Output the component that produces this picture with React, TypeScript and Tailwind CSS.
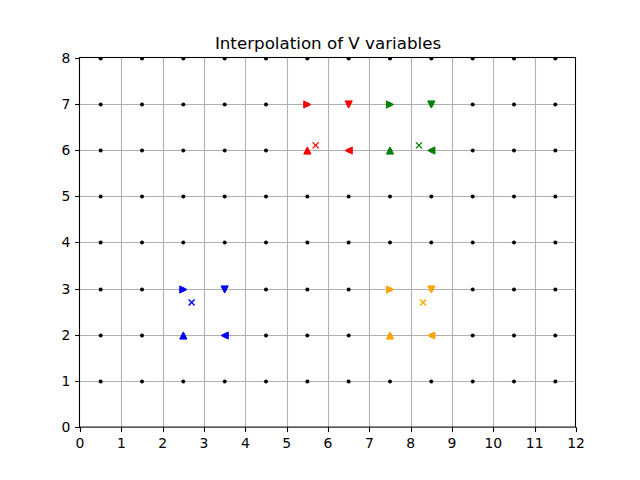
import React from "react";

const L = 80;
const R = 576;
const T = 57.6;
const B = 427.2;
const X = (v: number) => L + (v * (R - L)) / 12;
const Y = (v: number) => B - (v * (B - T)) / 8;
const snap = (p: number) => Math.round(p) + 0.5;

const groups = [
  { color: "#ff0000", x0: 5.5, y0: 6, cross: [5.7, 6.1] },
  { color: "#008000", x0: 7.5, y0: 6, cross: [8.2, 6.1] },
  { color: "#0000ff", x0: 2.5, y0: 2, cross: [2.7, 2.7] },
  { color: "#ffa500", x0: 7.5, y0: 2, cross: [8.3, 2.7] },
];

const s = 3.6;

// triangle paths centred on (cx, cy)
const tri = (kind: string, cx: number, cy: number) => {
  if (kind === "^") return `M${cx},${cy - s} L${cx - s},${cy + s} L${cx + s},${cy + s} Z`;
  if (kind === "v") return `M${cx},${cy + s} L${cx - s},${cy - s} L${cx + s},${cy - s} Z`;
  if (kind === ">") return `M${cx + s},${cy} L${cx - s},${cy - s} L${cx - s},${cy + s} Z`;
  return `M${cx - s},${cy} L${cx + s},${cy - s} L${cx + s},${cy + s} Z`;
};

const App = () => {
  const xs = Array.from({ length: 13 }, (_, i) => i);
  const ys = Array.from({ length: 9 }, (_, i) => i);
  const dots: [number, number][] = [];
  for (let j = 1; j <= 8; j++) for (let i = 0; i < 12; i++) dots.push([i + 0.5, j]);

  return (
    <div className="w-[640px] h-[480px] bg-white font-['DejaVu_Sans','Liberation_Sans',sans-serif]">
      <svg width="640" height="480" viewBox="0 0 640 480">
        <defs>
          <clipPath id="ax">
            <rect x={L} y={T} width={R - L} height={B - T} />
          </clipPath>
        </defs>

        {/* grid */}
        <g stroke="#b0b0b0" strokeWidth="1.1">
          {xs.slice(1, 12).map((v) => (
            <line key={"gx" + v} x1={snap(X(v))} x2={snap(X(v))} y1={T} y2={B} />
          ))}
          {ys.slice(1, 8).map((v) => (
            <line key={"gy" + v} y1={snap(Y(v))} y2={snap(Y(v))} x1={L} x2={R} />
          ))}
        </g>

        {/* data */}
        <g clipPath="url(#ax)">
          {dots.map(([a, b], i) => (
            <circle key={i} cx={X(a)} cy={snap(Y(b))} r="2" fill="#000" />
          ))}
          {groups.map((g, i) => (
            <g key={i} fill={g.color} stroke={g.color} strokeWidth="1">
              <path d={tri(">", X(g.x0), snap(Y(g.y0 + 1)))} />
              <path d={tri("v", X(g.x0 + 1), snap(Y(g.y0 + 1)))} />
              <path d={tri("^", X(g.x0), snap(Y(g.y0)))} />
              <path d={tri("<", X(g.x0 + 1), snap(Y(g.y0)))} />
              <path
                fill="none"
                strokeWidth="1.4"
                d={`M${X(g.cross[0]) - 3},${Y(g.cross[1]) - 3} L${X(g.cross[0]) + 3},${Y(g.cross[1]) + 3} M${X(g.cross[0]) - 3},${Y(g.cross[1]) + 3} L${X(g.cross[0]) + 3},${Y(g.cross[1]) - 3}`}
              />
            </g>
          ))}
        </g>

        {/* spines */}
        <rect x={snap(L) - 1} y={snap(T) - 1} width={R - L} height={B - T} fill="none" stroke="#000" strokeWidth="1.1" />

        {/* ticks */}
        <g stroke="#000" strokeWidth="1.1">
          {xs.map((v) => (
            <line key={"tx" + v} x1={snap(X(v))} x2={snap(X(v))} y1={B} y2={B + 4.9} />
          ))}
          {ys.map((v) => (
            <line key={"ty" + v} y1={snap(Y(v))} y2={snap(Y(v))} x1={L - 4.9} x2={L} />
          ))}
        </g>

        {/* tick labels */}
        <g fontSize="13.9" fill="#000">
          {xs.map((v) => (
            <text key={"lx" + v} x={X(v)} y={447.5} textAnchor="middle">
              {v}
            </text>
          ))}
          {ys.map((v) => (
            <text key={"ly" + v} x={70.3} y={Y(v) + 5} textAnchor="end">
              {v}
            </text>
          ))}
        </g>

        <text x={(L + R) / 2} y={49} textAnchor="middle" fontSize="16.7" fill="#000">
          Interpolation of V variables
        </text>
      </svg>
    </div>
  );
};

export default App;
